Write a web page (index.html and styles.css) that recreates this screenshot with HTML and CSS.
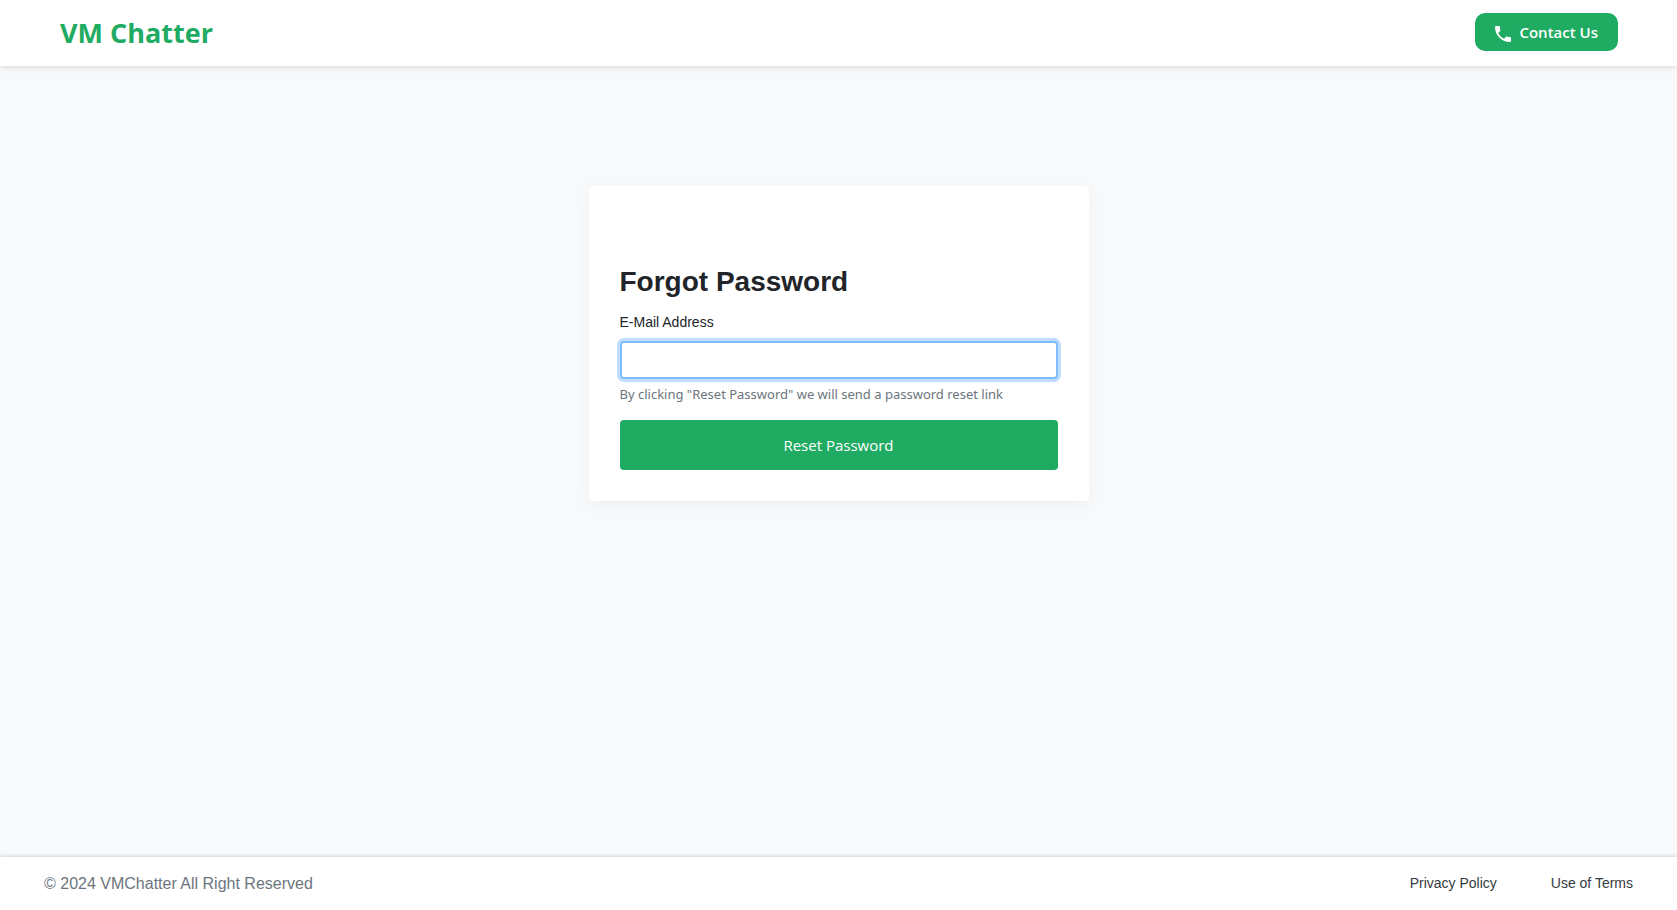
FILE: index.html
```html
<!DOCTYPE html>
<html lang="en">
<head>
<meta charset="utf-8">
<meta name="viewport" content="width=device-width, initial-scale=1">
<title>VM Chatter - Forgot Password</title>
<link rel="stylesheet" href="styles.css">
</head>
<body class="page">
<header class="header">
  <a class="brand" href="#">VM Chatter</a>
  <a class="contact" href="#">
    <svg class="contact-icon" viewBox="3 3 18 18" aria-hidden="true"><path fill="currentColor" d="M6.62 10.79c1.44 2.83 3.76 5.14 6.59 6.59l2.2-2.2c.27-.27.67-.36 1.02-.24 1.12.37 2.33.57 3.57.57.55 0 1 .45 1 1V20c0 .55-.45 1-1 1-9.39 0-17-7.61-17-17 0-.55.45-1 1-1h3.5c.55 0 1 .45 1 1 0 1.25.2 2.45.57 3.57.11.35.03.74-.25 1.02l-2.2 2.2z"/></svg>
    <span>Contact Us</span>
  </a>
</header>
<main class="main">
  <form class="card">
    <h1 class="title">Forgot Password</h1>
    <label class="label" for="email">E-Mail Address</label>
    <input class="input" id="email" type="email" aria-describedby="email-help">
    <p class="help" id="email-help">By clicking "Reset Password" we will send a password reset link</p>
    <button class="submit" type="button">Reset Password</button>
  </form>
</main>
<footer class="footer">
  <span class="copyright">© 2024 VMChatter All Right Reserved</span>
  <nav class="footer-links">
    <a class="footer-link" href="#">Privacy Policy</a>
    <a class="footer-link" href="#">Use of Terms</a>
  </nav>
</footer>
</body>
</html>
```
FILE: styles.css
```css
* {
  box-sizing: border-box;
}

.page {
  display: flex;
  flex-direction: column;
  min-height: 100vh;
  margin: 0;
  background: #f7f9fb;
  color: #212529;
  font-family: "Liberation Sans", Arial, sans-serif;
}

.header {
  display: flex;
  align-items: flex-start;
  justify-content: space-between;
  padding: 13px 59px 13px 60px;
  background: #fff;
  box-shadow: 0 1px 6px rgba(0, 0, 0, 0.15);
}

.brand {
  color: #1fab61;
  font: 700 27px/40px "Open Sans", "Noto Sans", sans-serif;
  text-decoration: none;
}

.contact {
  display: flex;
  align-items: center;
  gap: 8px;
  padding: 0 20px;
  border-radius: 10px;
  background: #1fab61;
  color: #fff;
  font: 600 15px/38px "Open Sans", "Noto Sans", sans-serif;
  text-decoration: none;
}

.contact-icon {
  width: 16px;
  height: 16px;
  margin-top: 3px;
}

.main {
  flex: 1;
  padding: 120px 16px 40px;
}

.card {
  max-width: 500px;
  margin: 0 auto;
  padding: 79px 31px 31px;
  border-radius: 4px;
  background: #fff;
  box-shadow: 0 4px 16px rgba(0, 0, 0, 0.04);
}

.title {
  margin: 0 0 12px;
  font-size: 28px;
  line-height: 34px;
}

.label {
  display: block;
  margin-bottom: 8px;
  font-size: 14px;
  line-height: 22px;
}

.input {
  display: block;
  width: 100%;
  height: 38px;
  padding: 6px 12px;
  border: 2px solid #80bdff;
  border-radius: 4px;
  outline: 0;
  background: #fff;
  box-shadow: 0 0 0 3px #bfdeff;
  color: #495057;
  font-size: 16px;
}

.help {
  margin: 4px 0 15px;
  color: #6c757d;
  font: 400 13px/22px "Noto Sans", "Open Sans", sans-serif;
}

.submit {
  display: block;
  width: 100%;
  padding: 12px;
  border: 0;
  border-radius: 4px;
  background: #1fab61;
  color: #fff;
  font: 400 15px/26px "Open Sans", "Noto Sans", sans-serif;
}

.footer {
  display: flex;
  align-items: flex-start;
  justify-content: space-between;
  padding: 14px 44px 13px;
  background: #fff;
  box-shadow: 0 -1px 4px rgba(0, 0, 0, 0.15);
}

.copyright {
  color: #6c757d;
  font-size: 16px;
  line-height: 26px;
}

.footer-links {
  display: flex;
  gap: 54px;
}

.footer-link {
  color: #343a40;
  font-size: 14px;
  line-height: 24px;
  text-decoration: none;
}
```
